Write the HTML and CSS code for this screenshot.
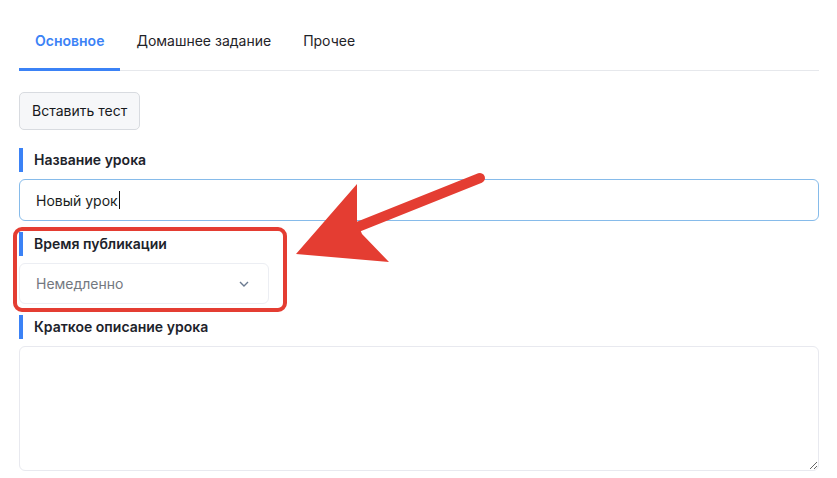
FILE: index.html
```html
<!DOCTYPE html>
<html lang="ru">
<head>
<meta charset="utf-8">
<title>Урок</title>
<link rel="stylesheet" href="styles.css">
</head>
<body>
<div class="page">
  <nav class="tabs">
    <div class="tab active">Основное</div>
    <div class="tab">Домашнее задание</div>
    <div class="tab">Прочее</div>
  </nav>

  <button class="btn" type="button">Вставить тест</button>

  <div class="field">
    <div class="label">Название урока</div>
    <div class="input focused"><span>Новый урок</span><span class="caret"></span></div>
  </div>

  <div class="field">
    <div class="label">Время публикации</div>
    <div class="select">
      <span class="placeholder">Немедленно</span>
      <svg class="chev" width="10" height="6" viewBox="0 0 10 6"><path d="M1 1 L5 5 L9 1" fill="none" stroke="#6b7a90" stroke-width="1.4"/></svg>
    </div>
  </div>

  <div class="field">
    <div class="label">Краткое описание урока</div>
    <textarea class="textarea"></textarea>
  </div>

  <svg class="annot" width="837" height="478" viewBox="0 0 837 478">
    <rect x="15" y="229" width="270" height="81" rx="7" ry="7" fill="none" stroke="#e43d32" stroke-width="4"/>
    <line x1="480" y1="178" x2="350" y2="230" stroke="#e43d32" stroke-width="10" stroke-linecap="round"/>
    <polygon points="296,254 357,184 357,222 362,234 389,262" fill="#e43d32"/>
  </svg>
</div>
</body>
</html>
```

FILE: styles.css
```css
* { box-sizing: border-box; }
html, body { margin: 0; padding: 0; background: #fff; }
body {
  font-family: Inter, "Noto Sans", "Liberation Sans", sans-serif;
  font-size: 14px;
  color: #212529;
}
.page {
  position: relative;
  width: 837px;
  height: 478px;
  overflow: hidden;
  padding: 0 18px 0 19px;
}
.tabs {
  display: flex;
  border-bottom: 1px solid #e6e8ec;
}
.tab {
  padding: 31px 16px 17px;
  line-height: 20px;
  font-size: 14px;
  color: #1f2328;
  border-bottom: 3px solid transparent;
  margin-bottom: -1px;
}
.tab.active {
  color: #3b82f6;
  font-weight: 600;
  border-bottom-color: #3b82f6;
}
.btn {
  display: block;
  margin-top: 21px;
  height: 38px;
  padding: 0 12px;
  font-family: inherit;
  font-size: 14px;
  line-height: 18px;
  color: #16191d;
  background: #f6f7f9;
  border: 1px solid #d8dbe0;
  border-radius: 5px;
}
.field { margin-top: 11px; }
.field:first-of-type { margin-top: 18px; }
.label {
  border-left: 4px solid #3b82f6;
  padding-left: 11px;
  line-height: 24px;
  height: 24px;
  font-weight: 600;
  font-size: 14px;
  color: #1d232b;
  margin-bottom: 7px;
}
.input {
  display: flex;
  align-items: center;
  height: 42px;
  padding: 0 16px;
  border: 1px solid #e6e8ee;
  border-radius: 6px;
  font-size: 14px;
  color: #1a1d21;
}
.input.focused { border-color: #86bbea; }
.caret {
  display: inline-block;
  width: 1px;
  height: 18px;
  background: #111;
  margin-left: 1px;
}
.select {
  display: flex;
  align-items: center;
  justify-content: space-between;
  width: 250px;
  height: 41px;
  padding: 0 19px 0 16px;
  border: 1px solid #eceef3;
  border-radius: 6px;
  background: #fff;
}
.placeholder { color: #737880; }
.chev { display: block; }
.textarea {
  display: block;
  width: 800px;
  height: 125px;
  margin: 0;
  border: 1px solid #e8e9ef;
  border-radius: 6px;
  resize: vertical;
  font-family: inherit;
  background: #fff;
}
.annot {
  position: absolute;
  left: 0;
  top: 0;
  pointer-events: none;
}
```
